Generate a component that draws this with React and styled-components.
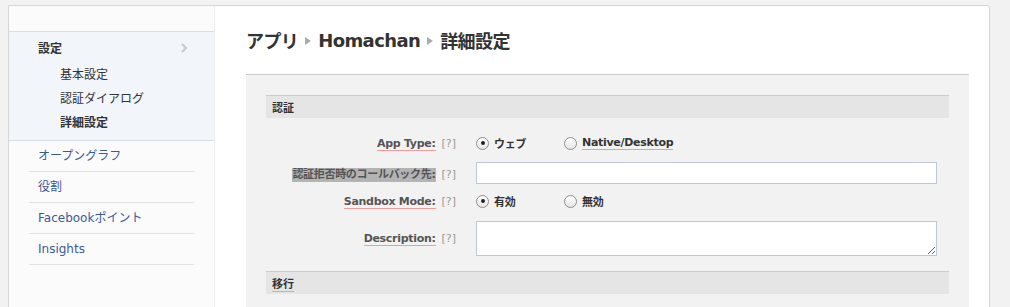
import React from "react";
import styled, { createGlobalStyle } from "styled-components";

const Global = createGlobalStyle`
  html, body { margin: 0; padding: 0; background: #f2f2f2; }
  body { font-family: "DejaVu Sans", "Noto Sans CJK JP", sans-serif; color: #333; }
`;

const Card = styled.div`
  margin: 5px 0 0 8px;
  width: 980px;
  height: 320px;
  background: #fff;
  border: 1px solid #d6d6d6;
  border-top-right-radius: 3px;
  display: flex;
`;

const Sidebar = styled.nav`
  width: 205px;
  background: #fbfbfb;
  border-right: 1px solid #ececec;
  padding-top: 25px;
`;

const SettingsBlock = styled.div`
  background: #f2f6fb;
  border-top: 1px solid #d8dde6;
  border-bottom: 1px solid #d8dde6;
  padding: 4px 0 5px;
`;

const SettingsHead = styled.div`
  display: flex;
  align-items: center;
  justify-content: space-between;
  height: 23px;
  padding: 0 26px 0 29px;
  font-size: 12px;
  font-weight: bold;
  color: #333;
  margin-bottom: 4px;
`;

const Chevron = styled.svg`
  width: 7px;
  height: 10px;
`;

const SubItem = styled.div`
  height: 24px;
  line-height: 24px;
  padding-left: 51px;
  font-size: 12px;
  font-weight: ${(p) => (p.$active ? "bold" : "normal")};
  color: #333;
`;

const LinkList = styled.div`
  margin: 0 20px;
`;

const LinkItem = styled.div`
  height: 30px;
  line-height: 31px;
  border-bottom: 1px solid #e2e2e2;
  padding-left: 9px;
  font-size: 12px;
  color: #3b5998;
`;

const Main = styled.main`
  flex: 1;
  padding: 0 20px 0 31px;
`;

const Heading = styled.h1`
  margin: 0;
  height: 68px;
  display: flex;
  align-items: center;
  gap: 7px;
  font-size: 18px;
  font-weight: bold;
  color: #333;
  letter-spacing: -0.6px;
`;

const Arrow = styled.span`
  width: 0;
  height: 0;
  border-top: 4px solid transparent;
  border-bottom: 4px solid transparent;
  border-left: 6px solid #aaa;
  margin-top: 2px;
`;

const Panel = styled.div`
  background: #f2f2f2;
  border-top: 1px solid #cbcbcb;
  padding: 20px 20px;
  height: 260px;
`;

const SectionHead = styled.div`
  background: #e5e5e5;
  border-top: 1px solid #cccccc;
  height: 22px;
  display: flex;
  align-items: center;
  padding-left: 6px;
  font-size: 11px;
  font-weight: bold;
  color: #333;
`;

const Underlined = styled.span`
  border-bottom: 1px solid #f59a9a;
  background: ${(p) => (p.$selected ? "#b3b3b3" : "transparent")};
`;

const Rows = styled.div`
  display: flex;
  flex-direction: column;
  padding: 14px 0 15px;
`;

const Row = styled.div`
  display: grid;
  grid-template-columns: 190px 461px;
  column-gap: 20px;
  align-items: center;
  height: ${(p) => p.$h || 22}px;
  margin-top: ${(p) => p.$mt || 0}px;
`;

const Label = styled.div`
  text-align: right;
  font-size: 11px;
  font-weight: bold;
  color: #555;
  letter-spacing: -0.3px;
  white-space: nowrap;
`;

const Help = styled.span`
  font-weight: normal;
  color: #999;
  margin-left: 6px;
  letter-spacing: 0;
`;

const Radios = styled.div`
  display: flex;
  align-items: center;
`;

const RadioOption = styled.label`
  display: flex;
  align-items: center;
  width: ${(p) => p.$w || 88}px;
  font-size: 11px;
  font-weight: bold;
  color: #333;
  letter-spacing: -0.3px;
`;

const RadioCircle = styled.span`
  box-sizing: border-box;
  width: 13px;
  height: 13px;
  border-radius: 50%;
  border: 1px solid #8d8d8d;
  background: linear-gradient(#ffffff, #e6e6e6);
  margin-right: 5px;
  display: flex;
  align-items: center;
  justify-content: center;
  &::after {
    content: "";
    width: 4px;
    height: 4px;
    border-radius: 50%;
    background: ${(p) => (p.$checked ? "#222" : "transparent")};
  }
`;

const TextInput = styled.input`
  box-sizing: border-box;
  width: 461px;
  height: 22px;
  border: 1px solid #bdc7d8;
  background: #fff;
  outline: none;
  margin: 0;
`;

const TextArea = styled.textarea`
  box-sizing: border-box;
  width: 461px;
  height: 35px;
  border: 1px solid #bdc7d8;
  background: #fff;
  outline: none;
  margin: 0;
  display: block;
`;

function Radio({ checked, label, underline, w }) {
  return (
    <RadioOption $w={w}>
      <RadioCircle $checked={checked} />
      {underline ? <Underlined>{label}</Underlined> : label}
    </RadioOption>
  );
}

export default function App() {
  return (
    <>
      <Global />
      <Card>
        <Sidebar>
          <SettingsBlock>
            <SettingsHead>
              設定
              <Chevron viewBox="0 0 7 10">
                <path d="M1 1 L5 5 L1 9" fill="none" stroke="#c8c8c8" strokeWidth="2" />
              </Chevron>
            </SettingsHead>
            <SubItem>基本設定</SubItem>
            <SubItem>認証ダイアログ</SubItem>
            <SubItem $active>詳細設定</SubItem>
          </SettingsBlock>
          <LinkList>
            <LinkItem>オープングラフ</LinkItem>
            <LinkItem>役割</LinkItem>
            <LinkItem>Facebookポイント</LinkItem>
            <LinkItem>Insights</LinkItem>
          </LinkList>
        </Sidebar>
        <Main>
          <Heading>
            アプリ <Arrow /> Homachan <Arrow /> 詳細設定
          </Heading>
          <Panel>
            <SectionHead>認証</SectionHead>
            <Rows>
              <Row>
                <Label>
                  <Underlined>App Type:</Underlined>
                  <Help>[?]</Help>
                </Label>
                <Radios>
                  <Radio checked label="ウェブ" />
                  <Radio label="Native/Desktop" underline w={120} />
                </Radios>
              </Row>
              <Row $mt={8}>
                <Label>
                  <Underlined $selected>認証拒否時のコールバック先:</Underlined>
                  <Help>[?]</Help>
                </Label>
                <TextInput />
              </Row>
              <Row $mt={6}>
                <Label>
                  <Underlined>Sandbox Mode:</Underlined>
                  <Help>[?]</Help>
                </Label>
                <Radios>
                  <Radio checked label="有効" />
                  <Radio label="無効" />
                </Radios>
              </Row>
              <Row $h={35} $mt={9}>
                <Label>
                  <Underlined>Description:</Underlined>
                  <Help>[?]</Help>
                </Label>
                <TextArea />
              </Row>
            </Rows>
            <SectionHead>
              <Underlined>移行</Underlined>
            </SectionHead>
          </Panel>
        </Main>
      </Card>
    </>
  );
}
